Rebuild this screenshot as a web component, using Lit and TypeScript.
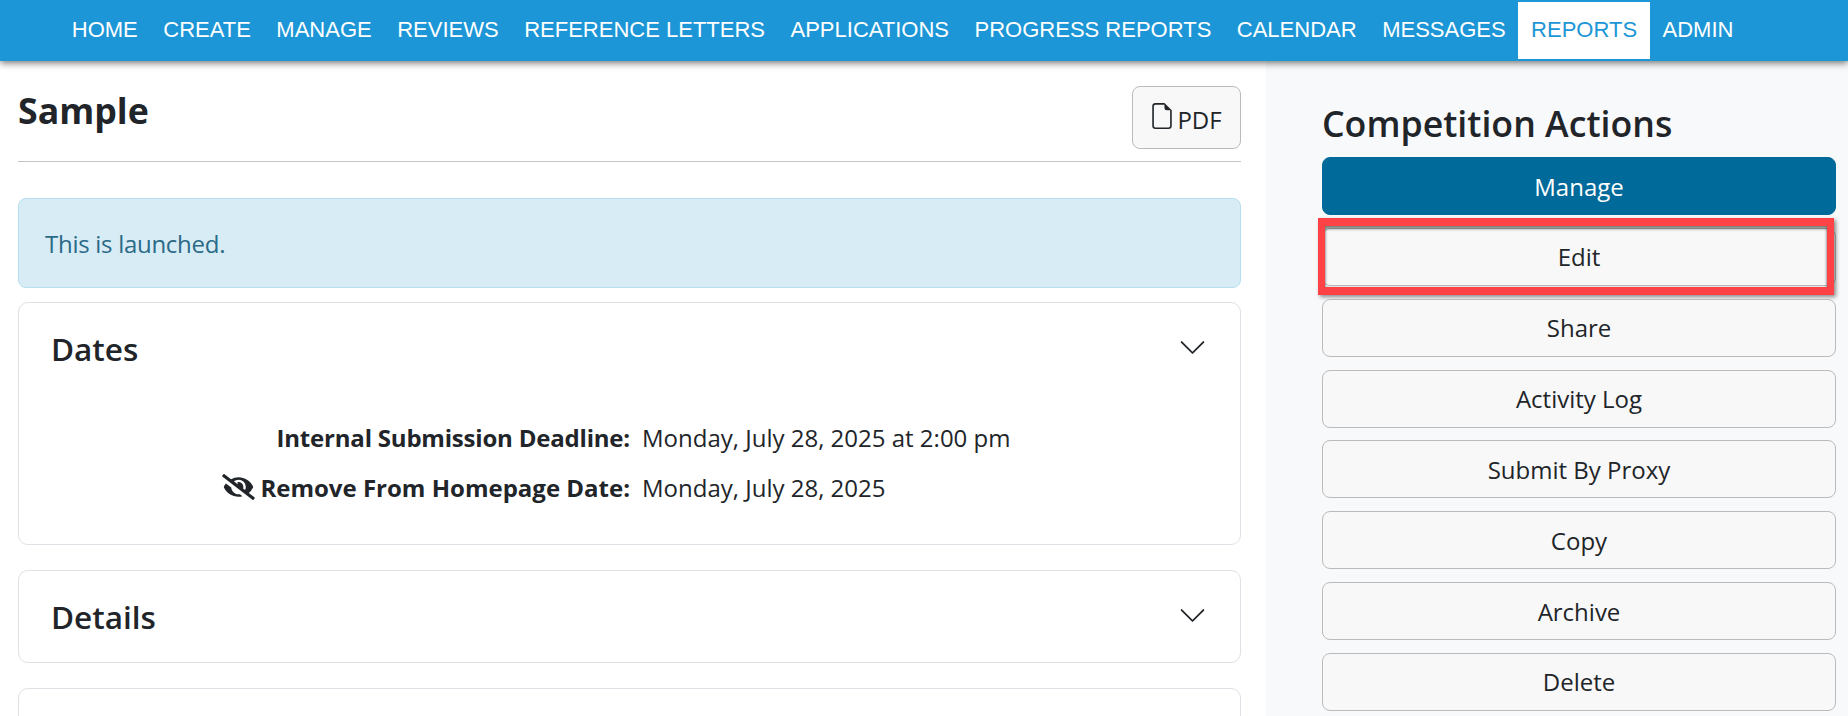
import { LitElement, html, css } from "lit";
import { customElement } from "lit/decorators.js";

const NAV = ["HOME","CREATE","MANAGE","REVIEWS","REFERENCE LETTERS","APPLICATIONS","PROGRESS REPORTS","CALENDAR","MESSAGES","REPORTS","ADMIN"];
const ACTIONS = ["Edit","Share","Activity Log","Submit By Proxy","Copy","Archive","Delete"];

const chevron = html`<svg class="chev" viewBox="0 0 16 16" fill="currentColor"><path d="M1.646 4.646a.5.5 0 0 1 .708 0L8 10.293l5.646-5.647a.5.5 0 0 1 .708.708l-6 6a.5.5 0 0 1-.708 0l-6-6a.5.5 0 0 1 0-.708z"/></svg>`;

@customElement("app-root")
export class AppRoot extends LitElement {
  static styles = css`
    :host { display: block; height: 716px; overflow: hidden; background: #fff; color: #212529; font-family: "Open Sans", "Noto Sans", sans-serif; font-size: 24px; }
    * { box-sizing: border-box; }
    nav { position: relative; z-index: 2; height: 61px; background: #1c96d6; box-shadow: 0 2px 7px rgba(0,0,0,.55); display: flex; align-items: flex-start; padding: 2px 0 0 59px; font-family: "Liberation Sans", Arial, sans-serif; font-size: 22px; color: #fff; }
    .item { height: 57px; padding: 0 12.76px 2px; display: flex; align-items: center; white-space: nowrap; }
    .item.active { background: #fff; color: #1c96d6; }
    .page { display: flex; height: 655px; }
    main { width: 1266px; flex: none; padding: 25px 25px 0 18px; }
    .head { display: flex; justify-content: space-between; height: 76px; border-bottom: 1.5px solid #c4c4c4; }
    h1 { margin: 0; font-size: 35.7px; font-weight: 700; line-height: 49px; }
    .pdf { width: 109px; height: 63px; border: 1px solid #bbb; border-radius: 8px; background: #f8f8f8; display: flex; align-items: center; justify-content: center; gap: 4px; }
    .pdf span { margin-top: 4px; }
    .pdf svg { width: 22px; height: 26px; margin-bottom: 4px; }
    .alert { margin-top: 36px; height: 90px; border: 1px solid #b6dfef; border-radius: 8px; background: #d8ecf6; color: #2a6a86; display: flex; align-items: center; padding: 0 26px; letter-spacing: -.28px; }
    .card { border: 1px solid #e0e0e6; border-radius: 10px; background: #fff; padding: 0 32px; }
    .dates { margin-top: 14px; height: 243px; }
    .details { margin-top: 25px; height: 93px; }
    .third { margin-top: 25px; height: 60px; }
    .ch { display: flex; justify-content: space-between; align-items: center; height: 91px; }
    h2 { margin: 0; font-size: 31.5px; font-weight: 600; }
    .chev { width: 29px; height: 29px; margin-right: 1px; margin-top: -3px; }
    .row { display: grid; grid-template-columns: 579px 1fr; column-gap: 12px; height: 50px; align-items: center; }
    .rows { padding-top: 18px; }
    .label { font-weight: 700; text-align: right; display: flex; justify-content: flex-end; align-items: center; gap: 5px; }
    .label.tight { letter-spacing: -.2px; }
    .label svg { width: 33px; height: 26px; }
    aside { flex: 1; background: #f8f9fa; padding: 31px 12px 0 56px; }
    h3 { margin: 0 0 3px; font-size: 35.7px; font-weight: 600; line-height: 62px; }
    .stack { display: flex; flex-direction: column; gap: 12.85px; }
    .btn { height: 58px; border: 1px solid #bbb; border-radius: 8px; background: #f8f8f8; display: flex; align-items: center; justify-content: center; }
    .btn.primary { background: #006a9a; border-color: #006a9a; color: #fff; }
    .btn-wrap { position: relative; }
    .mark { position: absolute; left: -4px; right: 2px; top: -10px; height: 77px; border: solid #ff4246; border-width: 8px 7px; box-shadow: 2px 2px 4px rgba(0,0,0,.45), inset 0 3px 3px rgba(0,0,0,.45), inset 1px 0 2px rgba(0,0,0,.15), inset -1px 0 2px rgba(0,0,0,.15); pointer-events: none; }
  `;

  render() {
    return html`
      <nav>${NAV.map(n => html`<div class="item ${n === "REPORTS" ? "active" : ""}">${n}</div>`)}</nav>
      <div class="page">
        <main>
          <div class="head">
            <h1>Sample</h1>
            <div class="pdf">
              <svg viewBox="2 0 12 16" fill="currentColor"><path d="M14 4.5V14a2 2 0 0 1-2 2H4a2 2 0 0 1-2-2V2a2 2 0 0 1 2-2h5.5L14 4.5zm-3 0A1.5 1.5 0 0 1 9.5 3V1H4a1 1 0 0 0-1 1v12a1 1 0 0 0 1 1h8a1 1 0 0 0 1-1V4.5h-2z"/></svg>
              <span>PDF</span>
            </div>
          </div>
          <div class="alert">This is launched.</div>
          <section class="card dates">
            <div class="ch"><h2>Dates</h2>${chevron}</div>
            <div class="rows">
              <div class="row"><div class="label tight">Internal Submission Deadline:</div><div>Monday, July 28, 2025 at 2:00 pm</div></div>
              <div class="row"><div class="label">
                <svg viewBox="0 0 640 512" fill="currentColor"><path d="M320 400c-75.85 0-137.25-58.71-142.9-133.11L72.2 185.82c-13.79 17.3-26.48 35.59-36.72 55.59a32.35 32.35 0 0 0 0 29.19C89.71 376.41 197.07 448 320 448c26.91 0 52.87-4 77.89-10.46L346 397.39a144.13 144.13 0 0 1-26 2.61zm313.82 58.1l-110.55-85.44a331.25 331.25 0 0 0 81.25-102.07 32.35 32.35 0 0 0 0-29.19C550.29 135.59 442.93 64 320 64a308.15 308.15 0 0 0-147.32 37.7L45.46 3.37A16 16 0 0 0 23 6.18L3.37 31.45A16 16 0 0 0 6.18 53.9l588.36 454.73a16 16 0 0 0 22.46-2.81l19.64-25.27a16 16 0 0 0-2.82-22.45zm-183.72-142l-39.3-30.38A94.75 94.75 0 0 0 416 256a94.76 94.76 0 0 0-121.31-92.21A47.65 47.65 0 0 1 304 192a46.64 46.64 0 0 1-1.54 10l-73.61-56.89A142.31 142.31 0 0 1 320 112a143.92 143.92 0 0 1 144 144c0 21.63-5.29 41.79-13.9 60.11z"/></svg>
                <span>Remove From Homepage Date:</span></div><div>Monday, July 28, 2025</div></div>
            </div>
          </section>
          <section class="card details"><div class="ch"><h2>Details</h2>${chevron}</div></section>
          <section class="card third"></section>
        </main>
        <aside>
          <h3>Competition Actions</h3>
          <div class="stack">
            <div class="btn primary">Manage</div>
            ${ACTIONS.map(a => html`<div class="btn-wrap"><div class="btn">${a}</div>${a === "Edit" ? html`<div class="mark"></div>` : ""}</div>`)}
          </div>
        </aside>
      </div>
    `;
  }
}
